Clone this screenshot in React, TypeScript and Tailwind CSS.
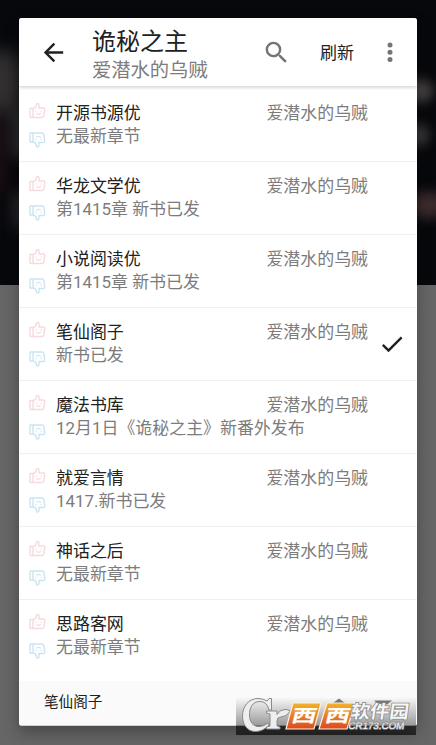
type Source = { name: string; chapter: string; current?: boolean };

const AUTHOR = "爱潜水的乌贼";

const sources: Source[] = [
  { name: "开源书源优", chapter: "无最新章节" },
  { name: "华龙文学优", chapter: "第1415章 新书已发" },
  { name: "小说阅读优", chapter: "第1415章 新书已发" },
  { name: "笔仙阁子", chapter: "新书已发", current: true },
  { name: "魔法书库", chapter: "12月1日《诡秘之主》新番外发布" },
  { name: "就爱言情", chapter: "1417.新书已发" },
  { name: "神话之后", chapter: "无最新章节" },
  { name: "思路客网", chapter: "无最新章节" },
];

function Thumb({ down }: { down?: boolean }) {
  return (
    <svg
      viewBox="0 0 18 18"
      className={down ? "h-[18px] w-[18px] text-[#cbe4f1]" : "h-[18px] w-[18px] text-[#f7dadd]"}
      fill="none"
      stroke="currentColor"
      strokeWidth="1.4"
      strokeLinejoin="round"
      strokeLinecap="round"
    >
      <g transform={down ? "matrix(1 0 0 -1 0 17.500)" : undefined}>
        <path d="M2 6.500h3v9H2.700q-.7 0-.7-.7zM5 6.500Q8.200 6 8.400 3.300V2.500Q8.600 1.500 9.600 1.500Q11 1.500 11 3.200V6H15.500Q17 6.200 16.700 7.800L15.800 14.200Q15.500 15.500 14.200 15.500H5" />
        <path d="M8 8.800v.4M13.200 8.800v.4M8.800 11.500Q10.600 13 12.400 11.500" strokeWidth="1.200" />
      </g>
    </svg>
  );
}

function Toolbar() {
  return (
    <header className="relative z-10 flex h-[68px] shrink-0 items-center bg-white shadow-[0_1px_4px_rgba(0,0,0,0.22)]">
      <svg viewBox="0 0 24 24" className="ml-[20px] h-[29px] w-[29px]" fill="#212121">
        <path d="M20 11H7.830l5.590-5.590L12 4l-8 8 8 8 1.410-1.410L7.830 13H20z" />
      </svg>
      <div className="ml-[24px] w-[168px] pt-[7px]">
        <div className="h-[29px] text-[24px] leading-[29px] text-[#212121]">诡秘之主</div>
        <div className="h-[27px] text-[19.300px] leading-[27px] text-[#7c7c7c]">{AUTHOR}</div>
      </div>
      <svg viewBox="0 0 24 24" className="ml-[2px] h-[29px] w-[29px]" fill="#757575">
        <path d="M15.500 14h-.79l-.28-.27A6.470 6.470 0 0 0 16 9.500 6.500 6.500 0 1 0 9.500 16c1.610 0 3.090-.59 4.230-1.570l.27.28v.79l5 4.990L20.490 19zm-6 0a4.500 4.500 0 1 1 0-9 4.500 4.500 0 0 1 0 9z" />
      </svg>
      <span className="ml-[29px] pt-[3px] text-[17px] text-[#212121]">刷新</span>
      <svg viewBox="0 0 28 28" className="ml-[22px] h-[28px] w-[28px]" fill="#757575">
        <circle cx="14" cy="7" r="2.500" />
        <circle cx="14" cy="14.300" r="2.500" />
        <circle cx="14" cy="21.600" r="2.500" />
      </svg>
    </header>
  );
}

function Row({ source }: { source: Source }) {
  return (
    <li className="flex h-[73px] border-b border-[#f0f0f0] pl-[9px] last:border-b-0">
      <div className="flex w-[18px] flex-col gap-[11px] pt-[13px]">
        <Thumb />
        <Thumb down />
      </div>
      <div className="ml-[10px] w-[312px] pt-[13px] text-[16.950px] leading-[23px] text-[#7c7c7c]">
        <div className="flex justify-between">
          <span className="text-[#212121]">{source.name}</span>
          <span>{AUTHOR}</span>
        </div>
        <div className="whitespace-nowrap">{source.chapter}</div>
      </div>
      {source.current && (
        <svg viewBox="0 0 24 24" className="ml-[10px] mt-[22px] h-[28px] w-[28px]" fill="#212121">
          <path d="M9 16.170 4.830 12l-1.420 1.410L9 19 21 7l-1.410-1.410z" />
        </svg>
      )}
    </li>
  );
}

function Watermark() {
  return (
    <svg
      viewBox="0 0 180 38"
      className="absolute left-[236px] top-[697px] h-[38px] w-[180px]"
      fontFamily="'Noto Sans CJK SC', sans-serif"
    >
      <defs>
        <linearGradient id="band" x1="0" x2="0" y1="0" y2="1">
          <stop offset="0" stopColor="#000" stopOpacity="0" />
          <stop offset=".74" stopColor="#000" stopOpacity=".38" />
          <stop offset=".76" stopColor="#000" stopOpacity=".52" />
          <stop offset="1" stopColor="#000" stopOpacity=".65" />
        </linearGradient>
        <linearGradient id="orange" x1="0" x2="0" y1="0" y2="1">
          <stop offset="0" stopColor="#f3b32c" />
          <stop offset="1" stopColor="#dc481f" />
        </linearGradient>
      </defs>
      <rect width="180" height="38" fill="url(#band)" />
      <path d="M97 6 103 1.500 109 6zM138 3.500h18l-5 4h-8z" fill="#777" />
      <g fill="#eeeeee" stroke="#8a8a8a" strokeWidth="1" strokeLinejoin="round">
        <path d="M33 1.500h2.500V13H33Q31 4.500 24 4.500C16 4.500 13.500 11 13.500 18C13.500 25 17 29.500 23 29.500Q28 29.500 32 26L33 28Q27 34.500 19.500 34.500C11 34.500 6.500 27 6.500 19C6.500 9 13 1.500 22 1.500Q27 1.500 31 4z" />
        <path d="M30.500 14H41V17.500Q44 12.500 49 12.500Q51.500 12.500 54.500 14Q50 20 45 20Q41 20 41 24V29L44 30V32H30.500V30L34 29V17L30.500 16z" />
      </g>
      <path d="M57 6H85L78 32H50zM91 6H119L111 32H83z" fill="url(#orange)" stroke="#fff1db" strokeWidth="1.200" />
      <g fill="#fff" stroke="#fff" strokeWidth=".2" fontWeight="700" fontSize="20">
        <text transform="translate(54.500 25.200) skewX(-14) scale(1.230 .88)">西</text>
        <text transform="translate(88 25.200) skewX(-14) scale(1.230 .88)">西</text>
      </g>
      <g fill="#f6f6f6" stroke="#888" strokeWidth="1.500" paintOrder="stroke">
        <text transform="translate(114 20.800) skewX(-8)" fontSize="18" fontWeight="700" textLength="58" lengthAdjust="spacingAndGlyphs">软件园</text>
        <text transform="translate(112 31.500) skewX(-8)" fontSize="9.500" textLength="56" lengthAdjust="spacingAndGlyphs" fontFamily="'Liberation Sans', sans-serif">CR173.COM</text>
      </g>
    </svg>
  );
}

export default function App() {
  return (
    <div className="relative h-[745px] w-[436px] overflow-hidden bg-[#666666] px-[19px] pt-[18px] font-['Roboto','Noto_Sans_CJK_SC',sans-serif]">
      <div className="absolute inset-x-0 top-0 h-[285px] overflow-hidden bg-[#07080c]">
        <div className="absolute -left-5 top-[50px] h-[65px] w-[42px] rounded-full bg-[#514a4a] opacity-60 blur-[9px]" />
        <div className="absolute left-[10px] top-[105px] h-[55px] w-[22px] rounded-full bg-[#373739] opacity-70 blur-[7px]" />
        <div className="absolute -left-2 top-[115px] h-[80px] w-[15px] rounded-full bg-[#38191d] opacity-40 blur-[7px]" />
        <div className="absolute left-[12px] top-[190px] h-[40px] w-[18px] rounded-full bg-[#3c3839] opacity-60 blur-[7px]" />
        <div className="absolute left-[405px] top-[80px] h-[22px] w-[28px] rounded-full bg-[#575151] opacity-80 blur-[6px]" />
        <div className="absolute left-[405px] top-[124px] h-[22px] w-[24px] rounded-full bg-[#484444] opacity-80 blur-[6px]" />
        <div className="absolute left-[410px] top-[192px] h-[26px] w-[36px] rounded-full bg-[#493435] opacity-80 blur-[6px]" />
      </div>
      <main className="relative flex h-[708px] w-[398px] flex-col overflow-hidden rounded-[3px] border-b border-[#d0d0d0] bg-white shadow-[0_7px_16px_rgba(0,0,0,0.3)]">
        <Toolbar />
        <ul className="h-[596px] overflow-hidden pt-[3px]">
          {sources.map((s) => (
            <Row key={s.name} source={s} />
          ))}
        </ul>
        <footer className="flex h-[44px] shrink-0 items-center bg-[#fafafa] pl-[25px] text-[14.600px] text-[#212121]">
          笔仙阁子
        </footer>
      </main>
      <Watermark />
    </div>
  );
}
